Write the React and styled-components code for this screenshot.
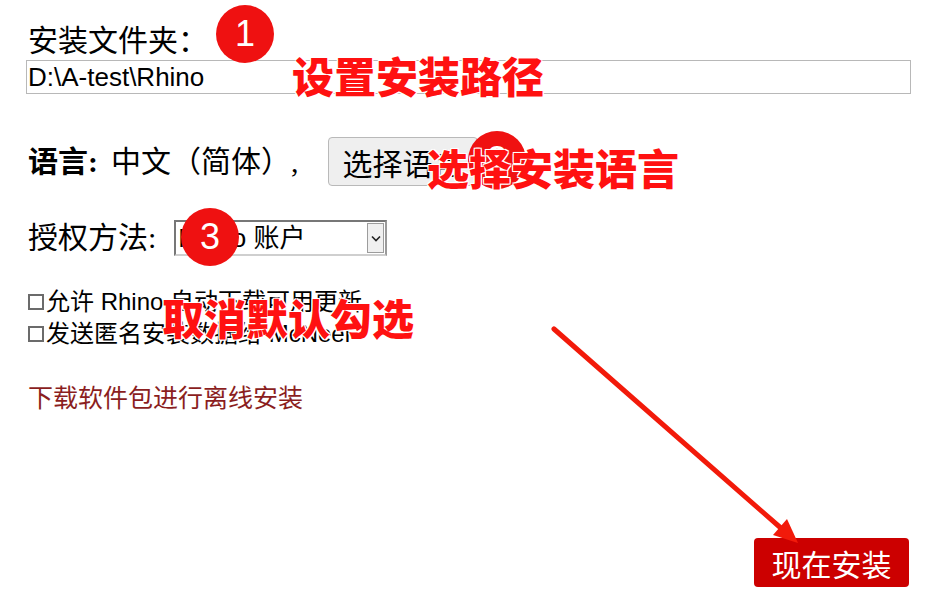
import React from 'react';
import styled, { createGlobalStyle } from 'styled-components';

const Global = createGlobalStyle`
  html, body { margin: 0; padding: 0; background: #fff; }
  body {
    font-family: "Liberation Serif", "Noto Sans CJK SC", serif;
    color: #000;
  }
`;

const Page = styled.div`
  position: relative;
  width: 925px;
  height: 596px;
  box-sizing: border-box;
  padding: 22px 14px 9px 26px;
  display: flex;
  flex-direction: column;
  overflow: hidden;
`;

const FieldLabel = styled.div`
  font-size: 30px;
  line-height: 38px;
  padding-left: 2px;
`;

const PathInput = styled.input`
  display: block;
  width: 100%;
  height: 34px;
  box-sizing: border-box;
  margin: 0;
  border: 1px solid #b8b8b8;
  padding: 0 1px;
  font-family: "Liberation Sans", "Noto Sans CJK SC", sans-serif;
  font-size: 26px;
  color: #000;
  background: #fff;
  outline: none;
`;

const Row = styled.div`
  display: flex;
  align-items: center;
  margin-top: ${(p) => p.$gap}px;
  height: ${(p) => p.$h}px;
  font-size: 30px;
  line-height: 34px;
  padding-left: 2px;
`;

const Strong = styled.span`
  font-weight: 600;
`;

const Value = styled.span`
  margin-left: 13px;
`;

const LangButton = styled.button`
  height: 49px;
  box-sizing: border-box;
  margin-left: 29px;
  padding: 0 14px;
  background: #efefef;
  border: 1px solid #b9b9b9;
  border-radius: 4px;
  font-family: "Liberation Serif", "Noto Sans CJK SC", serif;
  font-size: 30px;
  color: #000;
`;

const SelectBox = styled.div`
  margin-left: 18px;
  width: 213px;
  height: 36px;
  box-sizing: border-box;
  display: flex;
  align-items: center;
  justify-content: space-between;
  border: 2px solid #777;
  border-bottom-color: #cfcfcf;
  border-right-color: #9a9a9a;
  background: #fff;
  font-family: "Liberation Sans", "Noto Sans CJK SC", sans-serif;
  font-size: 26px;
  padding-left: 2px;
`;

const ArrowBox = styled.span`
  width: 17px;
  height: 30px;
  box-sizing: border-box;
  margin-right: 1px;
  border: 1px solid #9c9c9c;
  background: #f0f0f0;
  display: flex;
  align-items: center;
  justify-content: center;
`;

const CheckList = styled.div`
  margin-top: 30px;
  display: flex;
  flex-direction: column;
  padding-left: 2px;
  font-family: "Liberation Sans", "Noto Sans CJK SC", sans-serif;
  font-size: 24px;
`;

const CheckRow = styled.label`
  display: flex;
  align-items: center;
  height: 32px;
  line-height: 32px;
`;

const Box = styled.span`
  width: 16px;
  height: 16px;
  box-sizing: border-box;
  border: 2px solid #6b6b6b;
  margin-right: 2px;
  flex: none;
`;

const DownloadLink = styled.a`
  margin-top: 33px;
  padding-left: 2px;
  font-size: 25px;
  line-height: 32px;
  color: #8b1e1e;
  text-decoration: none;
`;

const Footer = styled.div`
  margin-top: auto;
  display: flex;
  justify-content: flex-end;
  padding-right: 2px;
`;

const InstallButton = styled.button`
  width: 155px;
  height: 49px;
  border: none;
  border-radius: 4px;
  background: #cc0000;
  color: #fff;
  font-family: "Liberation Serif", "Noto Sans CJK SC", serif;
  font-size: 30px;
  padding: 0;
`;

const Badge = styled.div`
  position: absolute;
  left: ${(p) => p.$x}px;
  top: ${(p) => p.$y}px;
  width: 58px;
  height: 58px;
  border-radius: 50%;
  background: #ef1111;
  color: #fff;
  display: flex;
  align-items: center;
  justify-content: center;
  font-family: "Liberation Sans", sans-serif;
  font-size: 36px;
`;

const Note = styled.div`
  position: absolute;
  left: ${(p) => p.$x}px;
  top: ${(p) => p.$y}px;
  font-family: "Noto Sans CJK SC", sans-serif;
  font-weight: 900;
  font-size: 42px;
  line-height: 1;
  color: #ff1111;
  white-space: nowrap;
  text-shadow: 0 0 2px #fff, 1px 1px 0 #fff, -1px -1px 0 #fff, 1px -1px 0 #fff, -1px 1px 0 #fff;
`;

const ArrowLayer = styled.svg`
  position: absolute;
  left: 0;
  top: 0;
  pointer-events: none;
`;

export default function App() {
  return (
    <>
      <Global />
      <Page>
        <FieldLabel>安装文件夹：</FieldLabel>
        <PathInput defaultValue={'D:\\A-test\\Rhino'} />

        <Row $gap={43} $h={49}>
          <Strong>语言:</Strong>
          <Value>中文（简体）,</Value>
          <LangButton>选择语言</LangButton>
        </Row>

        <Row $gap={34} $h={36}>
          授权方法:
          <SelectBox>
            <span>Rhino 账户</span>
            <ArrowBox>
              <svg width="10" height="7" viewBox="0 0 10 7">
                <path d="M1 1.5 L5 5.5 L9 1.5" fill="none" stroke="#222" strokeWidth="1.6" />
              </svg>
            </ArrowBox>
          </SelectBox>
        </Row>

        <CheckList>
          <CheckRow><Box />允许 Rhino 自动下载可用更新</CheckRow>
          <CheckRow><Box />发送匿名安装数据给 McNeel</CheckRow>
        </CheckList>

        <DownloadLink href="#">下载软件包进行离线安装</DownloadLink>

        <Footer>
          <InstallButton>现在安装</InstallButton>
        </Footer>

        <Badge $x={216} $y={5}>1</Badge>
        <Badge $x={468} $y={131}>2</Badge>
        <Badge $x={181} $y={208}>3</Badge>

        <Note $x={292} $y={54}>设置安装路径</Note>
        <Note $x={427} $y={146}>选择安装语言</Note>
        <Note $x={162} $y={296}>取消默认勾选</Note>

        <ArrowLayer width="925" height="596" viewBox="0 0 925 596">
          <line x1="554" y1="329" x2="782" y2="529" stroke="#f21a0a" strokeWidth="5" strokeLinecap="round" />
          <polygon points="798,543 773,535 787,519" fill="#f21a0a" />
        </ArrowLayer>
      </Page>
    </>
  );
}
